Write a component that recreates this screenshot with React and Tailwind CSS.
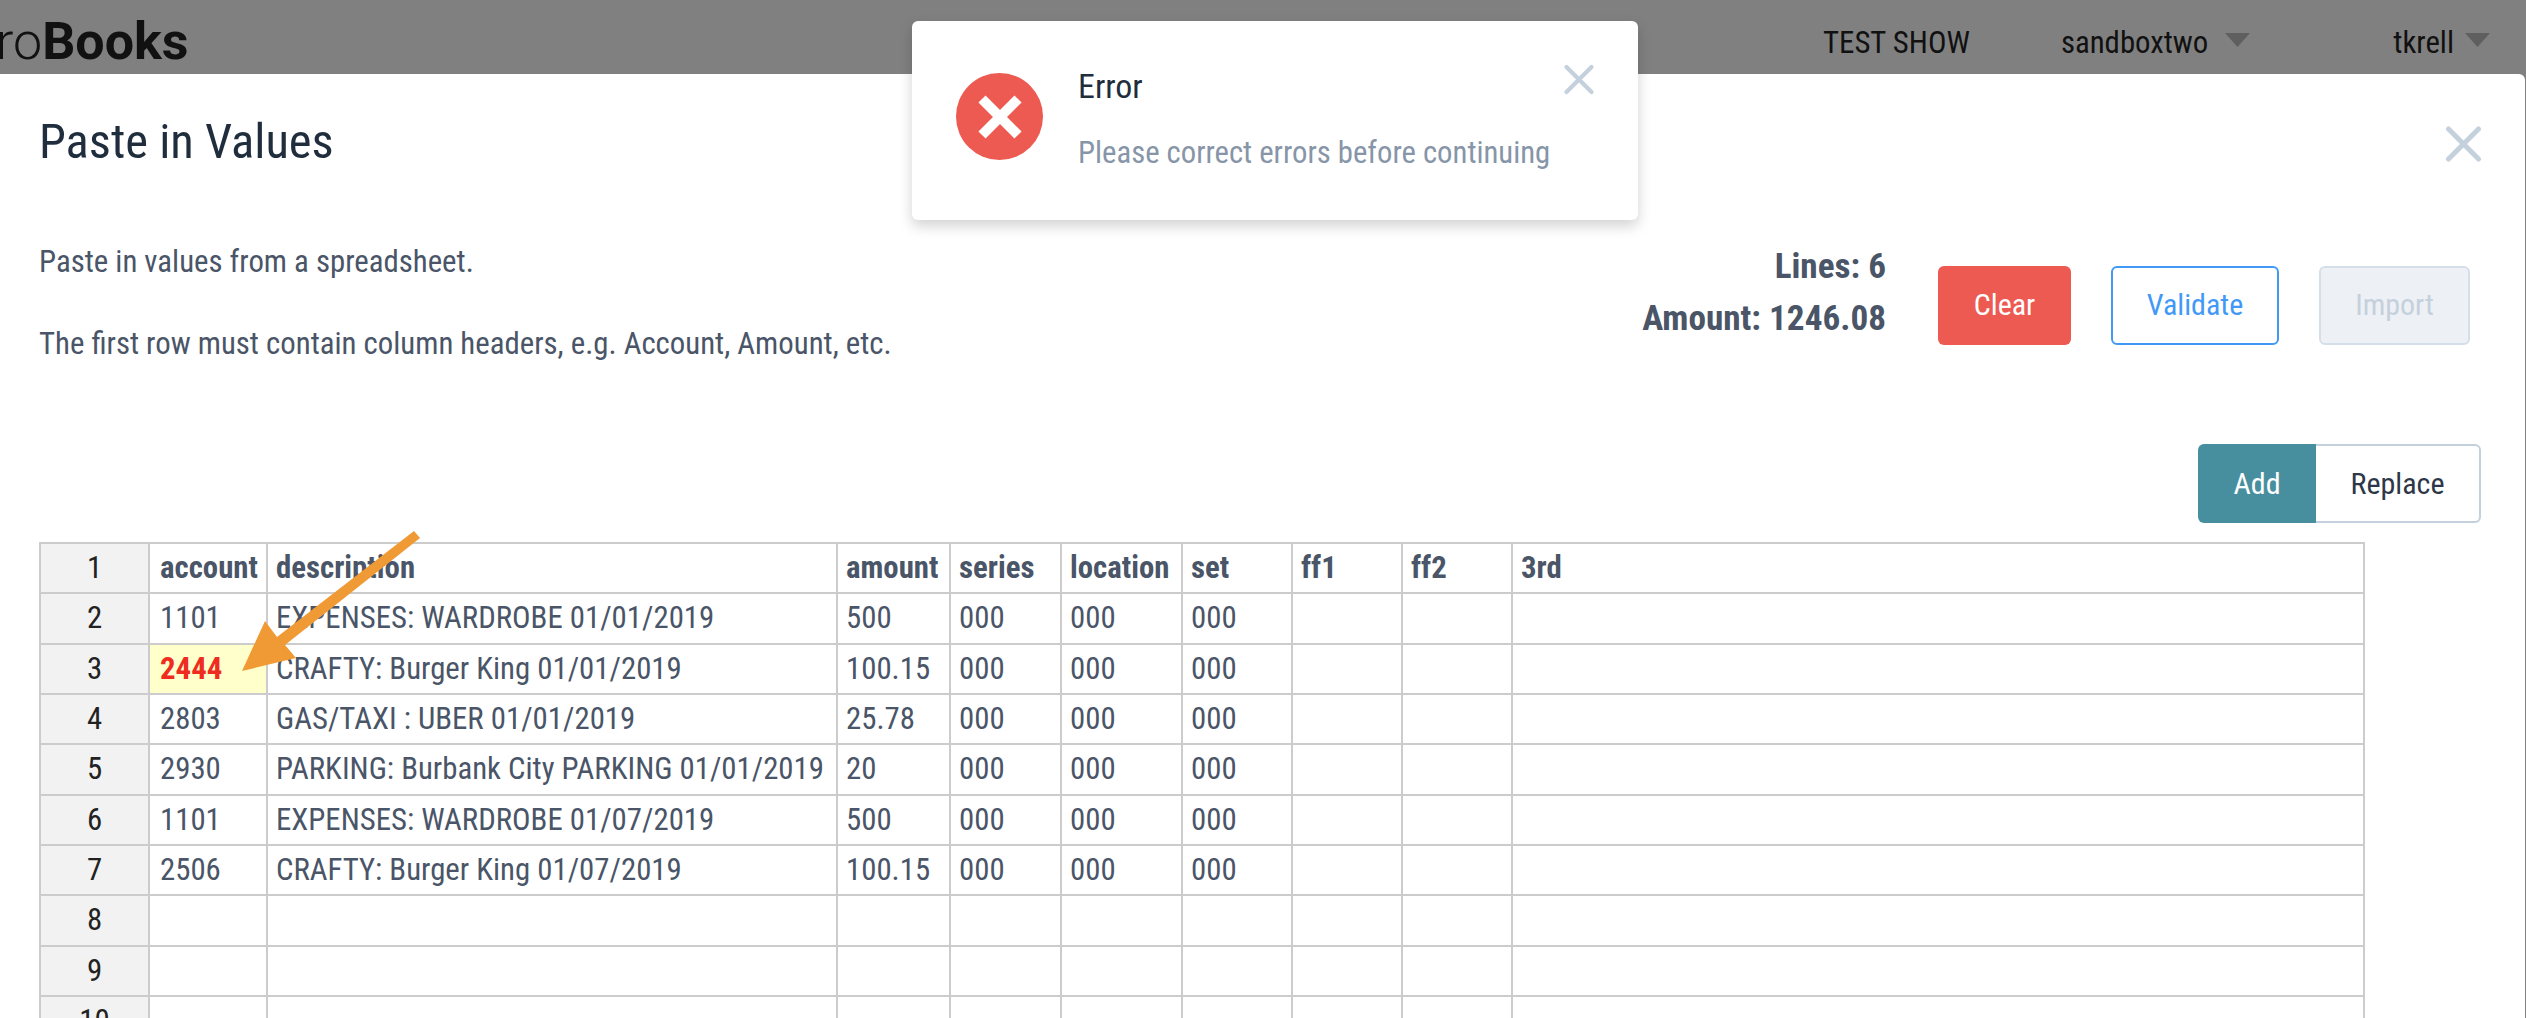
import React from 'react';

const columns = ['account', 'description', 'amount', 'series', 'location', 'set', 'ff1', 'ff2', '3rd'];

const rows = [
  ['1101', 'EXPENSES: WARDROBE 01/01/2019', '500', '000', '000', '000'],
  ['2444', 'CRAFTY: Burger King 01/01/2019', '100.15', '000', '000', '000'],
  ['2803', 'GAS/TAXI : UBER 01/01/2019', '25.78', '000', '000', '000'],
  ['2930', 'PARKING: Burbank City PARKING 01/01/2019', '20', '000', '000', '000'],
  ['1101', 'EXPENSES: WARDROBE 01/07/2019', '500', '000', '000', '000'],
  ['2506', 'CRAFTY: Burger King 01/07/2019', '100.15', '000', '000', '000'],
  [],
  [],
  [],
];

function Cross({ className }) {
  return (
    <svg viewBox="0 0 36 36" className={className} fill="none" stroke="currentColor" strokeWidth="5" strokeLinecap="round">
      <path d="M3 3 L33 33 M33 3 L3 33" />
    </svg>
  );
}

function Caret({ className }) {
  return (
    <svg viewBox="0 0 25 14" className={className} fill="#5f5f5f">
      <path d="M0 0 H25 L12.5 14 Z" />
    </svg>
  );
}

function HeaderCell({ value, first }) {
  return <div className={`border-r-2 border-b-2 border-[#cccccc] flex items-center font-bold text-[#4a5568] whitespace-nowrap ${first ? 'pl-[10px]' : 'pl-[8px]'}`}>{value}</div>;
}

function Cell({ value, error, first }) {
  if (error) {
    return <div className="border-r-2 border-b-2 border-[#cccccc] pl-[10px] flex items-center font-bold bg-[#ffffcc] text-[#ee2c1f]">{value}</div>;
  }
  return <div className={`border-r-2 border-b-2 border-[#cccccc] flex items-center text-[#4a5568] whitespace-nowrap ${first ? 'pl-[10px]' : 'pl-[8px]'}`}>{value}</div>;
}

function RowNumber({ value }) {
  return <div className="border-r-2 border-b-2 border-[#cccccc] bg-[#f2f2f2] flex items-center justify-center text-[#222222]">{value}</div>;
}

export default function App() {
  return (
    <div className="relative h-[1018px] overflow-hidden bg-[#808080] font-['Roboto',sans-serif] [font-stretch:84%]">
      <header className="h-[74px] pt-[9px] flex items-center text-[#111111]">
        <div className="text-[52px] ml-[-4px] font-light [font-stretch:90%]">ro<span className="font-bold">Books</span></div>
        <div className="ml-auto mt-[3px] flex items-center text-[30.8px]">
          <span className="mr-[91px]">TEST SHOW</span>
          <span>sandboxtwo</span>
          <Caret className="w-[25px] h-[14px] ml-[17px] mr-[143px] mb-[6px]" />
          <span>tkrell</span>
          <Caret className="w-[25px] h-[14px] ml-[11px] mr-[36px] mb-[6px]" />
        </div>
      </header>

      <main className="relative h-[944px] w-[2525px] bg-white rounded-tr-md pl-[39px]">
        <button className="absolute top-[52px] left-[2445px] text-[#c5d0dd]"><Cross className="w-[37px] h-[36px]" /></button>

        <h1 className="pt-[38px] text-[48.5px] leading-[60px] text-[#1f2d3d]">Paste in Values</h1>

        <div className="flex mt-[42px] h-[230px] text-[30.8px] text-[#4a5568]">
          <div className="leading-[82px] mt-[7px]">
            <p>Paste in values from a spreadsheet.</p>
            <p>The first row must contain column headers, e.g. Account, Amount, etc.</p>
          </div>
          <div className="ml-auto flex mr-[55px] mt-[52px] text-[30px]">
            <div className="text-right text-[35.2px] font-bold leading-[52px] mt-[-26px]">
              <p>Lines: 6</p>
              <p>Amount: 1246.08</p>
            </div>
            <button className="ml-[52px] w-[133px] h-[79px] pb-[2px] rounded-md bg-[#ed5a52] text-white">Clear</button>
            <button className="ml-[40px] w-[168px] h-[79px] pb-[2px] rounded-md border-2 border-[#4299f5] text-[#4299f5]">Validate</button>
            <button className="ml-[40px] w-[151px] h-[79px] pb-[2px] rounded-md border-2 border-[#d5dfe9] bg-[#edf0f4] text-[#c5d0dd]">Import</button>
          </div>
        </div>

        <div className="flex justify-end mr-[44px] text-[30px]">
          <button className="w-[118px] h-[79px] rounded-l-md bg-[#478f9e] text-white">Add</button>
          <button className="w-[165px] h-[79px] rounded-r-md border-2 border-l-0 border-[#c5d0dd] text-[#2d3748]">Replace</button>
        </div>

        <div className="mt-[19px] w-[2326px] border-t-2 border-l-2 border-[#cccccc] grid grid-cols-[109px_118px_570px_113px_111px_121px_110px_110px_110px_852px] auto-rows-[50.33px] text-[30.8px]">
          <RowNumber value={1} />
          {columns.map((c, j) => <HeaderCell key={c} value={c} first={j === 0} />)}
          {rows.map((row, i) => (
            <React.Fragment key={i}>
              <RowNumber value={i + 2} />
              {columns.map((c, j) => <Cell key={c} value={row[j]} first={j === 0} error={i === 1 && j === 0} />)}
            </React.Fragment>
          ))}
        </div>

        <svg className="absolute left-[230px] top-[446px] w-[200px] h-[160px]" viewBox="230 520 200 160">
          <path fill="#f09a35" d="M414 531 L420 538 L285 645 L296 658 L242 671 L265 621 L277 637 Z" />
        </svg>
      </main>

      <div className="absolute left-[912px] top-[21px] w-[726px] h-[199px] bg-white rounded-md shadow-[0_6px_14px_rgba(0,0,0,0.18)] flex">
        <div className="ml-[44px] mt-[52px] w-[87px] h-[87px] rounded-full bg-[#ed5a52] flex items-center justify-center">
          <svg viewBox="0 0 44 44" className="w-[44px] h-[44px]" fill="none" stroke="white" strokeWidth="10"><path d="M4 4 L40 40 M40 4 L4 40" /></svg>
        </div>
        <div className="ml-[35px] mt-[45px]">
          <p className="text-[34px] leading-[40px] text-[#1f2d3d]">Error</p>
          <p className="text-[30.7px] leading-[40px] mt-[27px] text-[#8795a8]">Please correct errors before continuing</p>
        </div>
        <button className="absolute left-[652px] top-[43px] text-[#c5d0dd]"><Cross className="w-[30px] h-[31px]" /></button>
      </div>
    </div>
  );
}
